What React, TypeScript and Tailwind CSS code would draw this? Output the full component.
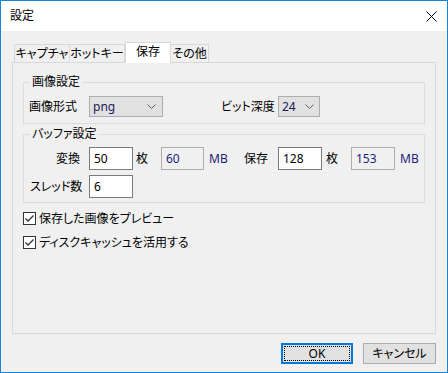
import React from "react";

const font: React.CSSProperties = {
  fontFamily: '"Segoe UI", "Noto Sans", "Noto Sans CJK JP", sans-serif',
  fontFeatureSettings: '"palt"',
};

function Chevron() {
  return (
    <svg width="9" height="5" viewBox="0 0 9 5" className="shrink-0">
      <path d="M0.5 0.5 L4.5 4.5 L8.5 0.5" fill="none" stroke="#606060" strokeWidth="1" />
    </svg>
  );
}

function Check() {
  return (
    <div className="w-[13px] h-[13px] border border-[#333333] bg-white flex items-center justify-center shrink-0">
      <svg width="11" height="11" viewBox="0 0 11 11">
        <path d="M1.5 5.5 L4 8 L9.5 2.5" fill="none" stroke="#333333" strokeWidth="1.3" />
      </svg>
    </div>
  );
}

function Input({ value, w, readOnly }: { value: string; w: string; readOnly?: boolean }) {
  return (
    <div
      className={
        "h-[23px] border flex items-center pl-[4px] text-[12px] leading-none shrink-0 " +
        w +
        (readOnly
          ? " bg-[#f0f0f0] border-[#adadad] text-[#1e1e78]"
          : " bg-white border-[#7a7a7a] text-[#000000]")
      }
    >
      {value}
    </div>
  );
}

export default function App() {
  return (
    <div
      className="w-[448px] h-[373px] border border-[#1883d7] bg-[#f0f0f0] flex flex-col text-[#000000] overflow-hidden whitespace-nowrap"
      style={font}
    >
      {/* Title bar */}
      <div className="h-[30px] bg-white flex items-center justify-between pl-[9px] pr-[9px] shrink-0">
        <span className="text-[12px] leading-none">設定</span>
        <svg width="11" height="11" viewBox="0 0 11 11" className="mr-[1px]">
          <path d="M0.5 0.5 L10.5 10.5 M10.5 0.5 L0.5 10.5" stroke="#000" strokeWidth="1" />
        </svg>
      </div>

      {/* Tabs */}
      <div className="pt-[11px] pl-[13px] flex items-end shrink-0">
        <div className="w-[56px] h-[18px] border border-b-0 border-[#d9d9d9] bg-[#f0f0f0] flex items-center justify-center text-[12px] leading-none">
          キャプチャ
        </div>
        <div className="w-[55px] h-[18px] border border-b-0 border-l-0 border-[#d9d9d9] bg-[#f0f0f0] flex items-center justify-center text-[12px] leading-none">
          ホットキー
        </div>
        <div className="relative z-10 -mb-px w-[46px] h-[21px] border border-b-0 border-[#d9d9d9] bg-white flex items-center justify-center pb-[2px] text-[12px] leading-none">
          保存
        </div>
        <div className="w-[38px] h-[18px] border border-b-0 border-l-0 border-[#d9d9d9] bg-[#f0f0f0] flex items-center justify-center text-[12px] leading-none">
          その他
        </div>
      </div>

      {/* Panel */}
      <div className="ml-[11px] w-[424px] h-[272px] border border-[#d9d9d9] bg-[#f0f0f0] pt-[19px] px-[10px] flex flex-col shrink-0">
        {/* Group 1 */}
        <div className="relative h-[42px] border border-[#dcdcdc] pt-[13px] pl-[5px]">
          <span className="absolute left-[6px] -top-[7px] px-[2px] bg-[#f0f0f0] text-[12px] leading-[12px]">
            画像設定
          </span>
          <div className="flex items-center h-[21px]">
            <span className="w-[60px] text-[12px] leading-none">画像形式</span>
            <div className="w-[74px] h-[21px] border border-[#adadad] bg-[#e1e1e1] flex items-center justify-between pl-[3px] pr-[6px]">
              <span className="text-[12px] leading-none text-[#1a1a5a]">png</span>
              <Chevron />
            </div>
            <span className="ml-[58px] w-[57px] text-[12px] leading-none">ビット深度</span>
            <div className="w-[42px] h-[21px] border border-[#adadad] bg-[#e1e1e1] flex items-center justify-between pl-[3px] pr-[5px]">
              <span className="text-[12px] leading-none text-[#1a1a5a]">24</span>
              <Chevron />
            </div>
          </div>
        </div>

        {/* Group 2 */}
        <div className="relative mt-[10px] h-[69px] border border-[#dcdcdc] pt-[12px] flex flex-col gap-[5px]">
          <span className="absolute left-[6px] -top-[7px] px-[2px] bg-[#f0f0f0] text-[12px] leading-[12px]">
            バッファ設定
          </span>
          <div className="flex items-center h-[23px]">
            <span className="w-[65px] pr-[9px] text-right text-[12px] leading-none">変換</span>
            <Input value="50" w="w-[44px]" />
            <span className="w-[28px] pl-[3px] text-[12px] leading-none">枚</span>
            <Input value="60" w="w-[43px]" readOnly />
            <span className="w-[35px] pl-[5px] text-[12px] leading-none text-[#1e1e78]">MB</span>
            <span className="w-[39px] pl-[5px] text-[12px] leading-none">保存</span>
            <Input value="128" w="w-[44px]" />
            <span className="w-[29px] pl-[4px] text-[12px] leading-none">枚</span>
            <Input value="153" w="w-[44px]" readOnly />
            <span className="pl-[5px] text-[12px] leading-none text-[#1e1e78]">MB</span>
          </div>
          <div className="flex items-center h-[23px]">
            <span className="w-[65px] pl-[6px] text-[12px] leading-none">スレッド数</span>
            <Input value="6" w="w-[44px]" />
          </div>
        </div>

        {/* Checkboxes */}
        <div className="mt-[9px] flex items-center h-[13px] gap-[3px]">
          <Check />
          <span className="text-[12px] leading-none">保存した画像をプレビュー</span>
        </div>
        <div className="mt-[11px] flex items-center h-[13px] gap-[3px]">
          <Check />
          <span className="text-[12px] leading-none">ディスクキャッシュを活用する</span>
        </div>
      </div>

      {/* Buttons */}
      <div className="mt-[9px] flex justify-end gap-[10px] pr-[11px] shrink-0">
        <div className="w-[72px] h-[21px] border-2 border-[#0078d7] bg-[#e1e1e1] p-[1px]">
          <div className="w-full h-full border border-dotted border-[#000000] flex items-center justify-center text-[12px] leading-none">
            OK
          </div>
        </div>
        <div className="w-[73px] h-[21px] border border-[#adadad] bg-[#e1e1e1] flex items-center justify-center text-[12px] leading-none">
          キャンセル
        </div>
      </div>
    </div>
  );
}
